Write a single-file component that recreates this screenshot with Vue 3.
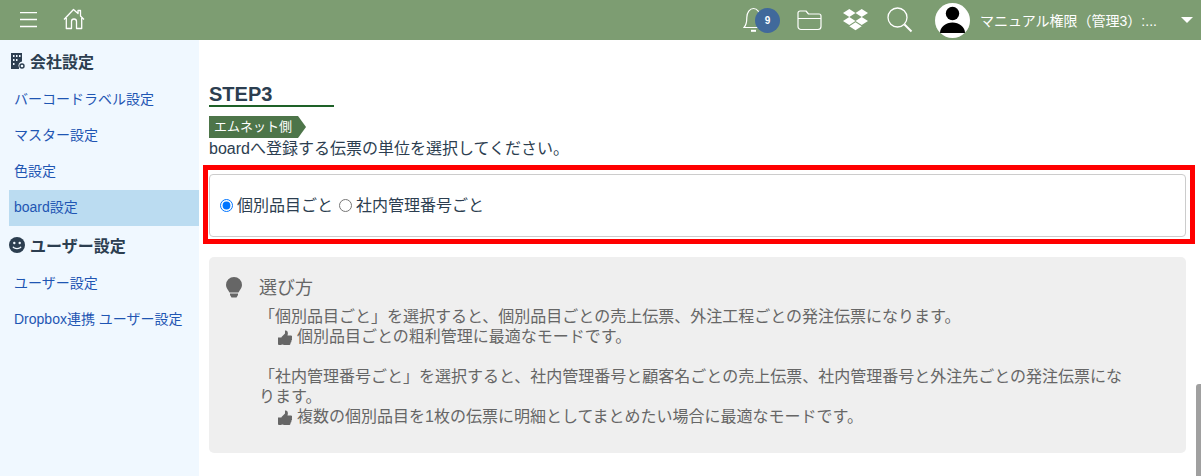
<script setup>
const masters = ['バーコードラベル設定', 'マスター設定', '色設定', 'board設定']
const users = ['ユーザー設定', 'Dropbox連携 ユーザー設定']
const thumb = 'M0 7.500h3.500V15H1a1 1 0 0 1-1-1zM3.500 7 7 3.500V0.500c2.500-.5 3.500 2 2.500 5H13c1.300 0 1.600 1.800.7 2.500.6.800.5 2-.4 2.500.3.800 0 1.900-.8 2.200.2 1-.3 2.300-1.500 2.300H7c-1.500 0-2-.5-3.500-.5z'
</script>

<template>
  <div class="page">
    <header class="topbar">
      <div class="left">
        <svg class="burger" width="18" height="16" viewBox="0 0 18 16"><path d="M0 .5h17M0 7.500h17M0 14.500h17" stroke="#fff" stroke-width="1.300" fill="none"/></svg>
        <svg class="home" width="22" height="22" viewBox="0 0 22 22" fill="none" stroke="#fff" stroke-width="1.300" stroke-linejoin="round"><path d="M1 11.500 10.500 1.500l4.500 4V2.500h2.500V8L21 11.500M3.300 10V20.500H8.500V13.500a2.500 2.500 0 0 1 5 0V20.500H18.700V10"/></svg>
      </div>
      <div class="right">
        <div class="bell">
          <svg width="22" height="26" viewBox="0 0 22 26" fill="none" stroke="#fff" stroke-width="1.200"><path d="M1 20.500c2.500-2.500 2.800-5 2.800-10 0-5 3-9 6.700-9s6.700 4 6.700 9c0 5 .3 7.500 2.800 10z"/><path d="M8 23.800h5" stroke-width="2"/></svg>
          <span class="badge">9</span>
        </div>
        <svg class="folder" width="25" height="21" viewBox="0 0 25 21" fill="none" stroke="#fff" stroke-width="1.200" stroke-linejoin="round"><path d="M1 16.500V3A2 2 0 0 1 3 1h6l2.500 3H22a2 2 0 0 1 2 2v10.500a3 3 0 0 1-3 3H4a3 3 0 0 1-3-3zM1 8.500h23"/></svg>
        <svg class="dropbox" width="25" height="22" viewBox="0 0 25 22" fill="#fff"><path d="M6.300 0 12.500 4 6.300 8 0 4zM18.700 0 25 4l-6.300 4-6.200-4zM0 12l6.300-4 6.200 4-6.200 4zM18.700 8l6.300 4-6.300 4-6.200-4zM6.300 17.300l6.200-4 6.200 4-6.200 4z"/></svg>
        <svg class="search" width="26" height="26" viewBox="0 0 26 26" fill="none" stroke="#fff"><circle cx="10.500" cy="10.500" r="9.500" stroke-width="1.300"/><path d="m17.500 17.500 7 7" stroke-width="2"/></svg>
        <div class="avatar">
          <svg width="35" height="35" viewBox="0 0 35 35"><circle cx="17.500" cy="17.500" r="17.500" fill="#fff"/><circle cx="17.500" cy="10.500" r="6.700"/><path d="M5 30c0-6 6-10.500 12.500-10.500S30 24 30 30z"/></svg>
        </div>
        <span class="username">マニュアル権限（管理3）:...</span>
        <span class="caret"></span>
      </div>
    </header>

    <div class="body">
      <aside class="sidebar">
        <h3 class="group first">
          <svg width="15" height="16" viewBox="0 0 15 16" fill="#2c3e50"><path d="M1 0h11v8.500a4 4 0 0 0-3 6V16H1z"/><g fill="#f0f8ff"><rect x="3" y="2" width="1.500" height="2"/><rect x="6" y="2" width="1.500" height="2"/><rect x="9" y="2" width="1.500" height="2"/><rect x="3" y="6" width="1.500" height="2"/><rect x="6" y="6" width="1.500" height="2"/><rect x="3" y="10" width="1.500" height="2"/></g><circle cx="12" cy="13" r="2" fill="none" stroke="#2c3e50" stroke-width="1.400"/></svg>
          会社設定
        </h3>
        <a v-for="m in masters" :key="m" class="item" :class="{ active: m === 'board設定' }">{{ m }}</a>
        <h3 class="group second">
          <svg width="16" height="16" viewBox="0 0 16 16"><circle cx="8" cy="8" r="8" fill="#2c3e50"/><circle cx="5.300" cy="6" r="1.200" fill="#f0f8ff"/><circle cx="10.700" cy="6" r="1.200" fill="#f0f8ff"/><path d="M4 9.800c1 2.300 7 2.300 8 0" stroke="#f0f8ff" stroke-width="1.200" fill="none"/></svg>
          ユーザー設定
        </h3>
        <a v-for="u in users" :key="u" class="item">{{ u }}</a>
      </aside>

      <main class="content">
        <h2 class="step">STEP3</h2>
        <div class="tag">エムネット側</div>
        <p class="lead">boardへ登録する伝票の単位を選択してください。</p>
        <div class="highlight">
          <div class="card">
            <label><input type="radio" name="unit" checked /><span>個別品目ごと</span></label>
            <label><input type="radio" name="unit" /><span>社内管理番号ごと</span></label>
          </div>
        </div>
        <section class="help">
          <svg class="bulb" width="16" height="21" viewBox="0 0 16 21" fill="#666"><path d="M8 0a8 8 0 0 0-8 8c0 3 2 4.500 3.500 7.500h9C14 12.500 16 11 16 8a8 8 0 0 0-8-8z"/><path d="M4 16.500h8v1.500l-1.500 2.500h-5L4 18z"/></svg>
          <div class="help-body">
            <h4>選び方</h4>
            <div class="help-text">
              <p>「個別品目ごと」を選択すると、個別品目ごとの売上伝票、外注工程ごとの発注伝票になります。</p>
              <p class="good"><svg width="14" height="15" viewBox="0 0 14 15" fill="#666"><path :d="thumb"/></svg>個別品目ごとの粗利管理に最適なモードです。</p>
              <p class="gap">「社内管理番号ごと」を選択すると、社内管理番号と顧客名ごとの売上伝票、社内管理番号と外注先ごとの発注伝票になります。</p>
              <p class="good"><svg width="14" height="15" viewBox="0 0 14 15" fill="#666"><path :d="thumb"/></svg>複数の個別品目を1枚の伝票に明細としてまとめたい場合に最適なモードです。</p>
            </div>
          </div>
        </section>
      </main>
    </div>
    <div class="scroll-thumb"></div>
  </div>
</template>

<style>
html, body { margin: 0; overflow: hidden; background: #fff; }
</style>

<style scoped>
.page {
  position: relative;
  width: 1201px;
  height: 476px;
  overflow: hidden;
  font-family: "Liberation Sans", "Noto Sans CJK JP", sans-serif;
  font-size: 16px;
  color: #2c3e50;
  background: #fff;
}
.topbar {
  height: 40px;
  background: #7d9d72;
  display: flex;
  justify-content: space-between;
  align-items: center;
}
.left { display: flex; align-items: center; padding-left: 20px; }
.home { margin-left: 25px; margin-top: -2px; }
.right { display: flex; align-items: center; height: 40px; }
.bell { position: relative; width: 37px; height: 26px; }
.badge {
  position: absolute;
  left: 12px;
  top: 1px;
  width: 25px;
  height: 25px;
  border-radius: 50%;
  background: #40699b;
  color: #fff;
  font-size: 10px;
  font-weight: 700;
  line-height: 25px;
  text-align: center;
}
.folder { margin-left: 17px; }
.dropbox { margin-left: 21px; }
.search { margin-left: 19px; margin-top: -1px; }
.avatar { margin-left: 22px; height: 35px; }
.username { margin-left: 10px; width: 204px; color: #fff; font-size: 14px; white-space: nowrap; }
.caret {
  margin-right: 8px;
  margin-left: -3px;
  border-left: 6px solid transparent;
  border-right: 6px solid transparent;
  border-top: 6px solid #fff;
}
.body { display: flex; height: 436px; }
.sidebar {
  width: 199px;
  flex: none;
  padding: 3px 0 0 9px;
  box-sizing: border-box;
  background: #f0f8ff;
}
.group {
  display: flex;
  align-items: center;
  gap: 5px;
  margin: 0;
  height: 39px;
  box-sizing: border-box;
  font-size: 16px;
  font-weight: 700;
  color: #2c3e50;
}
.group.first { padding: 0 0 4px 1px; }
.group.second { height: 40px; padding: 0 0 3px; }
.item {
  display: flex;
  align-items: center;
  height: 36px;
  box-sizing: border-box;
  padding: 0 0 4px 5px;
  font-size: 14px;
  color: #1f56b3;
}
.item.active { background: #bbdcf1; }
.content {
  flex: 1;
  padding: 41px 15px 0 10px;
  min-width: 0;
}
.step {
  margin: 0;
  width: 125px;
  height: 24px;
  border-bottom: 2px solid #1e6128;
  font-size: 20px;
  line-height: 26px;
  font-weight: 700;
  color: #2c3e50;
}
.tag {
  width: fit-content;
  margin-top: 9px;
  height: 22px;
  line-height: 22px;
  padding: 0 14px 0 5px;
  font-size: 13px;
  color: #fff;
  background: #4d7549;
  clip-path: polygon(0 0, calc(100% - 8px) 0, 100% 50%, calc(100% - 8px) 100%, 0 100%);
}
.lead { margin: 0; padding-top: 1px; font-size: 16px; line-height: 20px; }
.highlight {
  margin: 6px 0 0 -6px;
  width: 992px;
  height: 79px;
  box-sizing: border-box;
  border: 5px solid #f00;
  padding: 4px 4px 2px 1px;
}
.card {
  height: 63px;
  box-sizing: border-box;
  border: 1px solid #ccc;
  border-radius: 4px;
  display: flex;
  align-items: center;
  gap: 6px;
  padding-left: 10px;
  font-size: 16px;
}
.card label { display: flex; align-items: center; }
.card label span { padding-bottom: 4px; }
.card input { margin: 0 4px 0 0; width: 13px; height: 13px; }
.help {
  margin-top: 13px;
  width: 977px;
  height: 196px;
  box-sizing: border-box;
  background: #efefef;
  border-radius: 5px;
  padding: 20px 17px;
  display: flex;
  color: #666;
}
.bulb { flex: none; }
.help-body { margin-left: 17px; min-width: 0; }
.help-body h4 { margin: 0; height: 20px; font-size: 18px; line-height: 22px; font-weight: 400; }
.help-text { margin-top: 10px; width: 870px; font-size: 16px; line-height: 20px; }
.help-text p { margin: 0; }
.help-text .gap { margin-top: 20px; }
.good { display: flex; align-items: center; gap: 5px; padding-left: 19px; }
.scroll-thumb {
  position: absolute;
  right: 0;
  bottom: 0;
  width: 5px;
  height: 92px;
  background: #a0a0a0;
  border-radius: 3px 0 0 0;
}
</style>
